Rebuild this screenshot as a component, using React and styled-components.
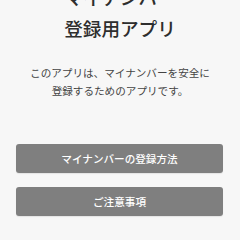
import { styled, createGlobalStyle } from "styled-components";

const GlobalStyle = createGlobalStyle`
  html, body {
    margin: 0;
    padding: 0;
    background: #f7f7f7;
  }
  body {
    font-family: "Noto Sans CJK JP", "Noto Sans", sans-serif;
  }
`;

const Page = styled.div`
  width: 240px;
  height: 240px;
  overflow: hidden;
  background: #f7f7f7;
  display: flex;
  flex-direction: column;
  align-items: center;
  padding: 0 16px;
  box-sizing: border-box;
`;

const Title = styled.h1`
  margin: -19px 0 0;
  font-size: 18.6px;
  line-height: 31px;
  font-weight: 500;
  color: #2e2e2e;
  text-align: center;
`;

const Lead = styled.p`
  margin: 21px 0 0;
  font-size: 10.6px;
  line-height: 18px;
  color: #444;
  text-align: center;
`;

const Buttons = styled.div`
  align-self: stretch;
  display: flex;
  flex-direction: column;
  gap: 14px;
  margin-top: 44px;
  padding-right: 1px;
`;

const Button = styled.button`
  height: 29px;
  border: none;
  border-radius: 3px;
  background: #7f7f7f;
  color: #fff;
  font-family: inherit;
  font-size: 10.6px;
  font-weight: 500;
  cursor: pointer;
  box-shadow: 0 1px 1px rgba(0, 0, 0, 0.08);
`;

export default function App() {
  return (
    <>
      <GlobalStyle />
      <Page>
        <Title>
          マイナンバー
          <br />
          登録用アプリ
        </Title>
        <Lead>
          このアプリは、マイナンバーを安全に
          <br />
          登録するためのアプリです。
        </Lead>
        <Buttons>
          <Button>マイナンバーの登録方法</Button>
          <Button>ご注意事項</Button>
        </Buttons>
      </Page>
    </>
  );
}
